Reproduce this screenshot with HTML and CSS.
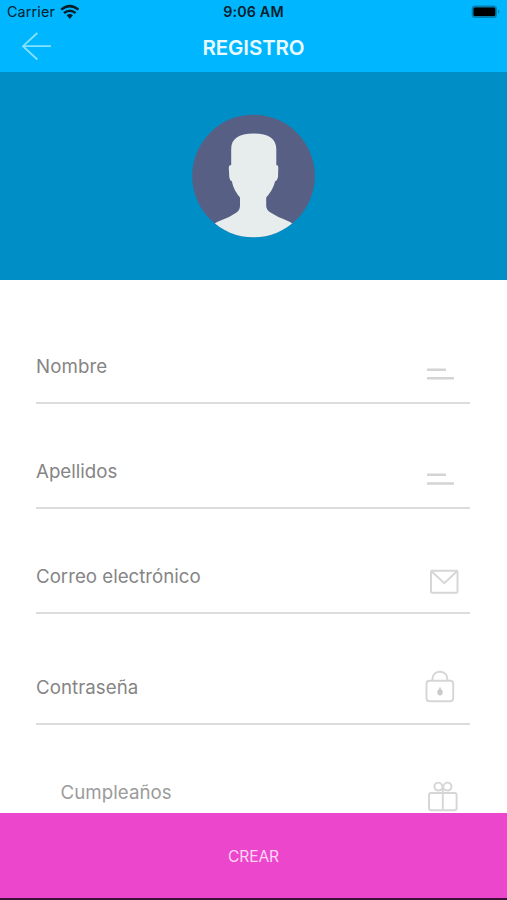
FILE: index.html
```html
<!DOCTYPE html>
<html lang="es">
<head>
<meta charset="utf-8">
<title>Registro</title>
<link rel="stylesheet" href="styles.css">
</head>
<body>
<div class="screen">
  <header class="header">
    <div class="status">
      <div class="carrier"><span class="carrier-name">Carrier</span>
        <svg class="wifi" width="20" height="16" viewBox="60 3 20 16"><g fill="none" stroke="#03202c" stroke-width="2.5"><path d="M61.2 8.6Q69.8 1.6 78.4 8.6"/><path d="M64 12Q69.8 7.4 75.6 12"/></g><path d="M66.6 14.3Q69.8 11.9 73 14.3L69.8 18Z" fill="#03202c"/></svg>
      </div>
      <span class="time">9:06 AM</span>
      <svg class="battery" width="32" height="16" viewBox="470 4 32 16"><rect x="471.7" y="5.5" width="25.3" height="12.5" rx="3.5" fill="#047fae"/><rect x="473.5" y="7.4" width="21.8" height="8.7" rx="1.5" fill="#000"/><path d="M498.3 9.5Q500.3 11.6 498.3 13.8Z" fill="#045f85"/></svg>
    </div>
    <div class="nav">
      <svg class="back" width="32" height="32" viewBox="20 30 32 32"><path d="M37.3 33L23 46.2L37.3 59.5M23 46.2H51" fill="none" stroke="#84e1ff" stroke-width="1.8"/></svg>
      <h1 class="title">REGISTRO</h1>
    </div>
  </header>
  <section class="hero">
    <svg class="avatar" width="124" height="124" viewBox="191 114 124 124">
      <defs><clipPath id="disc"><circle cx="252.500" cy="176" r="61.300"/></clipPath></defs>
      <circle cx="252.500" cy="176" r="61.300" fill="#585f85"/>
      <g clip-path="url(#disc)"><path transform="translate(-0.500 0)" fill="#e7eded" d="M230.700 165V149C230.700 139 238 133.500 253.200 133.500S275.800 139 275.800 149V165Q277.800 165 277.800 168L277.500 177Q277 180.500 274.500 181.500C273 188 269 194 265.700 197.500V206Q266 210 270 212.500Q277 217 284 219.500Q289.500 221.500 294 225V240H212V225Q216.500 221.500 222.500 219.500Q229.500 217 236 212.500Q239.300 210 239.500 206V197.500C236.500 194 232.500 188 231.500 181.500Q229 180.500 228.800 177L228.300 168Q228.300 165 230.700 165Z"/></g>
    </svg>
  </section>
  <main class="form">
    <div class="field first"><label class="label nombre">Nombre</label>
      <svg class="icon" width="40" height="50" viewBox="420 341 40 50"><path d="M427 369.700H446M427 378.300H454" stroke="#d4d4d4" stroke-width="2.400"/></svg></div>
    <div class="field"><label class="label apellidos">Apellidos</label>
      <svg class="icon" width="40" height="50" viewBox="420 446 40 50"><path d="M427 474.800H446M427 483.500H454" stroke="#d4d4d4" stroke-width="2.400"/></svg></div>
    <div class="field"><label class="label correo">Correo electrónico</label>
      <svg class="icon" width="40" height="50" viewBox="420 551 40 50"><g fill="none" stroke="#d6d6d6" stroke-width="1.900"><rect x="431" y="570.800" width="26.500" height="22" rx="1"/><path d="M431.500 571.300L444.300 583.300L457 571.300"/></g></svg></div>
    <div class="field tall"><label class="label contrasena">Contraseña</label>
      <svg class="icon" width="40" height="50" viewBox="420 662 40 50"><g fill="none" stroke="#d6d6d6" stroke-width="1.900"><rect x="426.500" y="680.800" width="26.700" height="20.500" rx="3"/><path d="M432.500 680V678.500C432.500 669.500 447.300 669.500 447.300 678.500V680"/></g><path d="M440 686.500Q440.800 689.500 442.800 691.300C443.500 697 436.500 697 437.200 691.300Q439.200 689.500 440 686.500Z" fill="#cacaca"/></svg></div>
    <div class="field last"><label class="label cumple">Cumpleaños</label>
      <svg class="icon" width="40" height="50" viewBox="420 767 40 50"><g fill="none" stroke="#d6d6d6" stroke-width="1.900"><rect x="429" y="793" width="27.600" height="17.300" rx="2"/><path d="M442.800 793V811M442.800 792C442.800 785 441.500 782.600 438.800 782.600C433 782.600 433 790.500 438.500 790.500Q441 790.500 442.800 788M442.800 792C442.800 785 444.500 782.600 447 782.600C453 782.600 453 790.500 447.300 790.500Q444.800 790.500 442.800 788"/></g></svg></div>
  </main>
  <button class="create" type="button"><span class="create-text">CREAR</span></button>
</div>
</body>
</html>
```
FILE: styles.css
```css
* { box-sizing: border-box; }
body { margin: 0; font-family: Inter, "Liberation Sans", sans-serif; background: #fff; }
.screen { width: 507px; height: 900px; display: flex; flex-direction: column; overflow: hidden; }
.header { height: 72px; flex: none; background: #00b7ff; display: flex; flex-direction: column; }
.status { height: 24px; display: grid; grid-template-columns: 1fr auto 1fr; align-items: center; padding: 0 5px 0 7px; color: #03202c; }
.carrier { display: flex; align-items: center; gap: 5px; }
.carrier-name { font-size: 14.300px; line-height: 16px; letter-spacing: 0.150px; }
.wifi { margin-top: -1px; }
.time { font-size: 14.300px; font-weight: 600; line-height: 16px; letter-spacing: 0.150px; margin-left: -2px; }
.battery { justify-self: end; }
.nav { height: 48px; display: grid; grid-template-columns: 32px 1fr 32px; align-items: center; padding: 0 20px; }
.back { align-self: start; margin-top: 6px; }
.title { margin: 0; text-align: center; font-size: 20.500px; line-height: 24px; font-weight: 600; letter-spacing: -0.100px; color: #e8faff; }
.hero { height: 208px; flex: none; background: #008ec7; display: flex; justify-content: center; align-items: center; }
.form { height: 533px; flex: none; overflow: hidden; padding: 0 37px 0 36px; }
.field { height: 105px; display: flex; justify-content: space-between; align-items: flex-end; border-bottom: 2px solid #dcdcdc; }
.first { height: 124px; }
.tall { height: 111px; }
.label { line-height: 22px; font-size: 18.700px; color: #858585; padding-bottom: 24px; white-space: nowrap; }
.nombre { letter-spacing: 0.100px; }
.contrasena, .cumple { letter-spacing: 0.050px; }
.icon { margin: 0 10px 11px 0; flex: none; }
.cumple { margin-left: 24.500px; color: #9b9b9b; }
.create { flex: none; height: 87px; border: 0; border-bottom: 2px solid #3b1138; background: #eb46cc; color: #ffd5f7; font-family: inherit; font-size: 15.600px; letter-spacing: -0.150px; line-height: 20px; padding: 2px 0 0; }
```
